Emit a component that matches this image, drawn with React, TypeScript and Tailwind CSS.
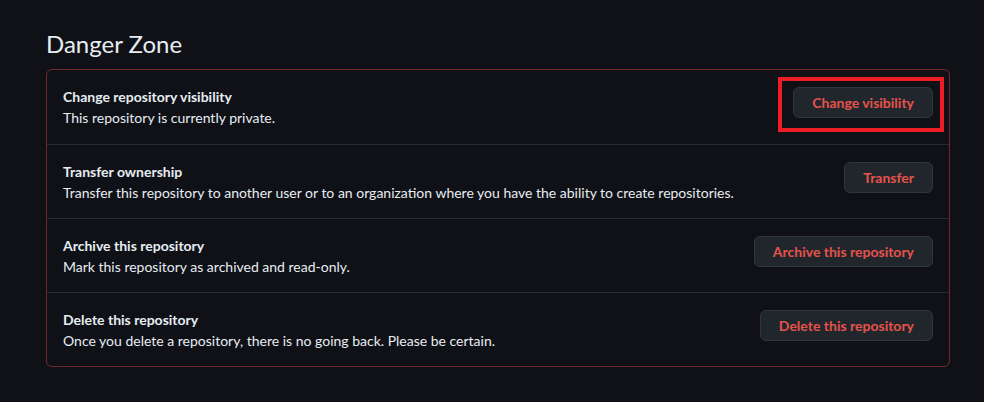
import React from 'react';

type Row = {
  title: string;
  description: string;
  action: string;
  highlighted?: boolean;
};

const rows: Row[] = [
  {
    title: 'Change repository visibility',
    description: 'This repository is currently private.',
    action: 'Change visibility',
    highlighted: true,
  },
  {
    title: 'Transfer ownership',
    description:
      'Transfer this repository to another user or to an organization where you have the ability to create repositories.',
    action: 'Transfer',
  },
  {
    title: 'Archive this repository',
    description: 'Mark this repository as archived and read-only.',
    action: 'Archive this repository',
  },
  {
    title: 'Delete this repository',
    description: 'Once you delete a repository, there is no going back. Please be certain.',
    action: 'Delete this repository',
  },
];

const App: React.FC = () => {
  return (
    <div
      className="min-h-[402px] w-full bg-[#101116] pl-[46px] pr-[34px] pt-[29px] text-[#e6edf3]"
      style={{ fontFamily: 'Lato, "Segoe UI", sans-serif' }}
    >
      <h2 className="mb-[10px] text-[24px] font-normal leading-[30px] text-[#e6edf3]">Danger Zone</h2>

      <div className="rounded-md border border-[#6e2b2b]">
        {rows.map((row, i) => (
          <div
            key={row.title}
            className={`flex h-[74px] items-start justify-between px-4 pt-4 ${
              i > 0 ? 'border-t border-[#262a31]' : ''
            }`}
          >
            <div className="flex flex-col">
              <span className="text-[14px] font-bold leading-[21px] text-[#e6edf3]">{row.title}</span>
              <span className="text-[14px] leading-[21px] text-[#e6edf3]">{row.description}</span>
            </div>

            {/* Action */}
            <div className="relative mt-px">
              <button
                type="button"
                className="h-[31px] rounded-md border border-[#30363d] bg-[#21262d] px-[18px] text-[14px] font-bold text-[#e5534b]"
              >
                {row.action}
              </button>
              {row.highlighted && (
                <div className="pointer-events-none absolute -top-[10px] -bottom-[14px] -left-[15px] -right-[11px] border-4 border-[#ee1c25]" />
              )}
            </div>
          </div>
        ))}
      </div>
    </div>
  );
};

export default App;
